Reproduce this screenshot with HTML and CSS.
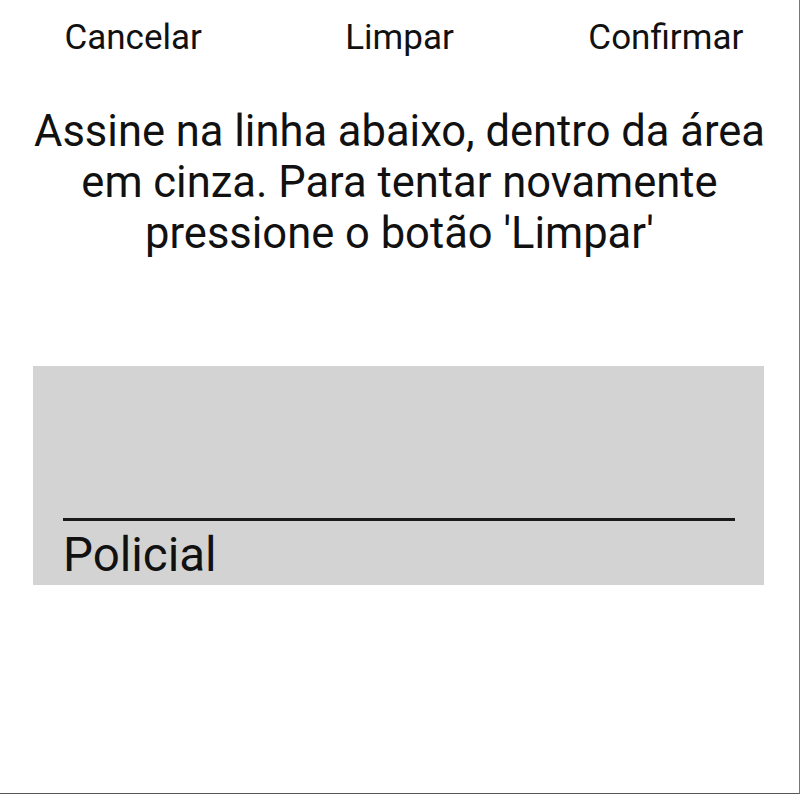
FILE: index.html
```html
<!DOCTYPE html>
<html lang="pt">
<head>
<meta charset="utf-8">
<title>Assinatura</title>
<link rel="stylesheet" href="styles.css">
</head>
<body>
<div class="screen">
  <div class="toolbar">
    <span class="action">Cancelar</span>
    <span class="action">Limpar</span>
    <span class="action">Confirmar</span>
  </div>
  <p class="instructions">Assine na linha abaixo, dentro da área<br>em cinza. Para tentar novamente<br>pressione o botão 'Limpar'</p>
  <div class="pad">
    <div class="sign-line"></div>
    <div class="label">Policial</div>
  </div>
</div>
</body>
</html>
```
FILE: styles.css
```css
html, body {
  margin: 0;
  padding: 0;
  background: #fff;
}
body {
  font-family: Roboto, "Liberation Sans", sans-serif;
  color: #111;
}
.screen {
  box-sizing: border-box;
  width: 800px;
  height: 794px;
  border-right: 1px solid #777;
  border-bottom: 1px solid #555;
  overflow: hidden;
}
.toolbar {
  display: flex;
  padding-top: 17px;
}
.action {
  flex: 1;
  text-align: center;
  font-size: 35px;
  line-height: 41px;
}
.instructions {
  margin: 48px 0 0;
  text-align: center;
  font-size: 43.5px;
  line-height: 51px;
}
.pad {
  box-sizing: border-box;
  width: 731px;
  height: 219px;
  margin: 107px 0 0 33px;
  background: #d3d3d3;
  padding: 152px 29px 0 30px;
}
.sign-line {
  height: 3px;
  background: #1a1a1a;
}
.label {
  margin-top: 8px;
  font-size: 47.5px;
  line-height: 52px;
}
```
